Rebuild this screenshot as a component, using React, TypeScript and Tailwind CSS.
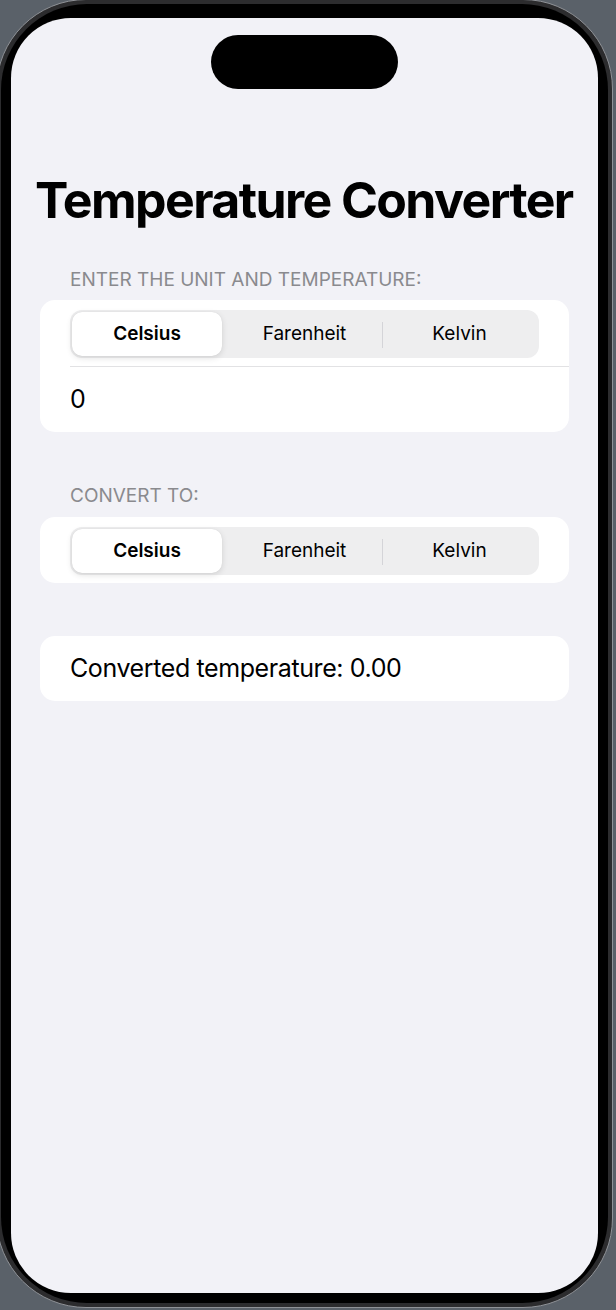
import React from "react";

function Segmented() {
  return (
    <div className="relative grid h-[48px] grid-cols-3 rounded-[12px] bg-[#eeeeef] p-[2px]">
      <div className="mr-[5px] flex items-center justify-center rounded-[10px] bg-white pt-px text-[19px] font-semibold text-black shadow-[0_2px_6px_rgba(0,0,0,0.12),0_0_1px_rgba(0,0,0,0.10)]">
        Celsius
      </div>
      <div className="flex items-center justify-center pt-px text-[19px] font-normal text-black">
        Farenheit
      </div>
      <div className="relative flex items-center justify-center pt-px text-[19px] font-normal text-black">
        <div className="absolute left-0 top-[10px] h-[26px] w-px bg-[#d4d4d8]" />
        Kelvin
      </div>
    </div>
  );
}

export default function App() {
  return (
    <div
      className="h-[1310px] w-[616px] overflow-hidden bg-[#5a6169]"
      style={{ fontFamily: "Inter, 'Noto Sans', sans-serif" }}
    >
      <div className="ml-[-4px] mt-[-1px] h-[1309px] w-[617px] rounded-[90px] border border-[#8f9297] bg-[#2c2c2e] p-[4px]">
        <div className="h-full rounded-[86px] bg-black px-[10px] pb-[10px] pt-[14px]">
          <div className="flex h-full flex-col overflow-hidden rounded-[60px] bg-[#f2f2f7]">
            <div className="mx-auto mt-[17px] h-[54px] w-[187px] shrink-0 rounded-full bg-black" />

            <h1 className="mt-[81px] whitespace-nowrap pl-[24px] text-[50px] font-bold leading-[61px] tracking-[-1.6px] text-black">
              Temperature Converter
            </h1>

            <div className="mt-[37px] pl-[59px] text-[19px] leading-[24px] text-[#8a8a8e]">
              ENTER THE UNIT AND TEMPERATURE:
            </div>
            <div className="mx-[29px] mt-[8px] rounded-[15px] bg-white">
              <div className="px-[30px] pb-[8px] pt-[10px]">
                <Segmented />
              </div>
              <div className="ml-[30px] h-px bg-[#e2e2e4]" />
              <div className="flex h-[65px] items-center px-[30px] text-[25px] text-black">
                0
              </div>
            </div>

            <div className="mt-[52px] pl-[59px] text-[19px] leading-[24px] text-[#8a8a8e]">
              CONVERT TO:
            </div>
            <div className="mx-[29px] mt-[9px] rounded-[15px] bg-white">
              <div className="px-[30px] pb-[8px] pt-[10px]">
                <Segmented />
              </div>
            </div>

            <div className="mx-[29px] mt-[53px] flex h-[65px] items-center rounded-[15px] bg-white px-[30px] text-[25px] tracking-[-0.4px] text-black">
              Converted temperature: 0.00
            </div>
          </div>
        </div>
      </div>
    </div>
  );
}
